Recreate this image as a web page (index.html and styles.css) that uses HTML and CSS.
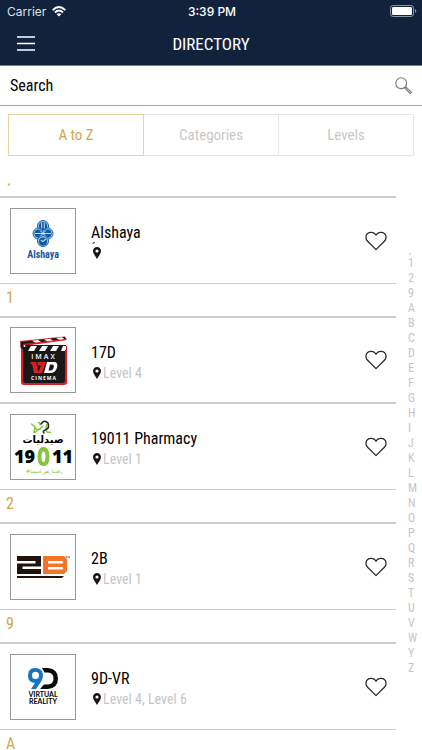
FILE: index.html
```html
<!DOCTYPE html>
<html lang="en">
<head>
<meta charset="UTF-8">
<meta name="viewport" content="width=device-width, initial-scale=1.0">
<title>Directory</title>
<link rel="stylesheet" href="styles.css">
</head>
<body>

<!-- shared icons -->
<svg class="sprite" aria-hidden="true">
  <symbol id="heart" viewBox="0 0 22 20">
    <path d="M11 18.6 L2.6 10.2 C.3 7.8 .5 4.4 2.6 2.6 C4.8 .8 8.4 1 10.2 3.2 L11 4.2 L11.8 3.2 C13.6 1 17.2 .8 19.4 2.6 C21.5 4.4 21.7 7.8 19.4 10.2 Z" fill="none" stroke="#2b2b2b" stroke-width="1.3" stroke-linejoin="round"/>
  </symbol>
  <symbol id="pin" viewBox="0 0 8 12">
    <path fill="#161616" fill-rule="evenodd" d="M4 0 C1.7 0 0 1.7 0 4 C0 6.8 2.6 9 4 12 C5.4 9 8 6.8 8 4 C8 1.7 6.3 0 4 0 Z M4 2.4 A1.6 1.6 0 1 1 4 5.6 A1.6 1.6 0 1 1 4 2.4 Z"/>
  </symbol>
</svg>

<div class="app">
<header>
  <div class="status-bar">
    <div class="carrier">
      Carrier
      <svg width="14" height="11" viewBox="0 0 14 11" aria-hidden="true">
        <g fill="none" stroke="#fff" stroke-width="1.9">
          <path d="M.7 4.1 Q7 -1.9 13.3 4.1"/>
          <path d="M3 6.5 Q7 2.7 11 6.5"/>
        </g>
        <path d="M4.7 8.2 Q7 6.2 9.3 8.2 L7 10.6 Z" fill="#fff"/>
      </svg>
    </div>
    <div class="clock">3:39 PM</div>
    <svg class="battery" width="27" height="12" viewBox="0 0 27 12" aria-hidden="true">
      <rect x=".5" y=".5" width="23" height="11" rx="2.6" fill="none" stroke="#8b95a3"/>
      <rect x="2" y="2" width="20" height="8" rx="1.2" fill="#fff"/>
      <path d="M25 4 Q26.3 4.7 26.3 6 Q26.3 7.3 25 8 Z" fill="#8b95a3"/>
    </svg>
  </div>
  <div class="nav-bar">
    <button type="button" class="menu-btn" aria-label="Menu">
      <svg width="18" height="15" viewBox="0 0 18 15" aria-hidden="true">
        <path d="M0 1 H18 M0 7.5 H18 M0 14 H18" stroke="#fff" stroke-width="1.4"/>
      </svg>
    </button>
    <h1>DIRECTORY</h1>
  </div>
</header>

<form class="search">
  <input type="text" id="search" placeholder="Search" aria-label="Search">
  <button type="submit" aria-label="Search">
    <svg width="17" height="17" viewBox="0 0 17 17" aria-hidden="true">
      <g fill="none" stroke="#777" stroke-width="1.1">
        <circle cx="6.2" cy="6.2" r="5.4"/>
        <path d="M9.8 11 L10.9 9.9 L16.1 14.8 Q16.6 15.4 16 16 Q15.3 16.6 14.7 16 Z"/>
      </g>
    </svg>
  </button>
</form>

<nav class="tabs">
  <button type="button" class="tab active">A to Z</button>
  <button type="button" class="tab">Categories</button>
  <button type="button" class="tab">Levels</button>
</nav>

<main>
<div class="list">
  <h2>&#x2CF;</h2>
  <div class="shop">
    <svg class="logo" viewBox="0 0 64 64" role="img" aria-label="Alshaya">
      <g fill="#9cc4e6" stroke="#1766ad" stroke-width="1">
        <circle cx="32" cy="17" r="5.500"/>
        <circle cx="27.500" cy="24.500" r="5.500"/>
        <circle cx="36.500" cy="24.500" r="5.500"/>
        <circle cx="32" cy="32" r="5.500"/>
      </g>
      <g fill="#1259a3">
        <circle cx="32" cy="17" r="4"/>
        <circle cx="27.500" cy="24.500" r="4"/>
        <circle cx="36.500" cy="24.500" r="4"/>
        <circle cx="32" cy="32.500" r="4"/>
      </g>
      <path d="M30.700 13.500 V19.500 M33.300 13.500 V19.500 M24 24.500 H40 M29 21.500 L35 27.500 M35 21.500 L29 27.500" stroke="#d9e9f7" stroke-width=".9"/>
      <path d="M30 31 Q32 34 34.500 30" stroke="#d9e9f7" stroke-width="1.200" fill="none"/>
      <text x="32" y="49" class="alshaya-name">Alshaya</text>
    </svg>
    <div class="info">
      <h3>Alshaya</h3>
      <p><span class="tick">&#x2CF;</span><svg class="pin" aria-hidden="true"><use href="#pin"/></svg></p>
    </div>
    <button type="button" class="fav" aria-label="Add Alshaya to favourites"><svg aria-hidden="true"><use href="#heart"/></svg></button>
  </div>

  <h2>1</h2>
  <div class="shop">
    <svg class="logo" viewBox="0 0 64 64" role="img" aria-label="IMAX 17D Cinema">
      <path d="M9 13 L54 8.500 L56 12 L13 18 H56 V54 Q56 57 53 57 H13 Q10 57 10 54 V22 Z" fill="#e01b22"/>
      <path d="M12 23 H54 V52 Q54 55 51 55 H15 Q12 55 12 52 Z" fill="#181818"/>
      <path d="M10 14 L54 9 L54.500 11 L13 17 H55 V23 H13 L9.500 19 Z" fill="#181818"/>
      <path d="M21 12.700 L27 12 L31 14.500 L25 15.300 Z M33 11.400 L39 10.700 L43 13 L37 13.800 Z M45 10 L51 9.300 L54 11.500 L49 12.200 Z" fill="#fff"/>
      <path d="M20 18 H26 L23 23 H17 Z M31 18 H37 L34 23 H28 Z M42 18 H48 L45 23 H39 Z M52 18 H55 V21 L54 23 H50 Z" fill="#fff"/>
      <path d="M12 16.500 L54 11.500" stroke="#e01b22" stroke-width="1"/>
      <circle cx="13.500" cy="18" r="1" fill="#fff"/>
      <text x="33" y="31" class="imax">IMAX</text>
      <path d="M19 34 H25 L27.500 45 H23 L21.500 37.500 Z M26 34 H35 L31 45 H27 L30 37.500 H27 Z" fill="#e01b22"/>
      <path fill-rule="evenodd" d="M36 34 H43 Q47.500 34 46 39.500 Q44.500 45 39 45 H33 Z M39 36.500 L37.500 42.500 H39.500 Q42 42.500 42.700 39.500 Q43.500 36.500 41 36.500 Z" fill="#fff"/>
      <text x="33" y="52" class="cinema">CINEMA</text>
    </svg>
    <div class="info">
      <h3>17D</h3>
      <p><svg class="pin" aria-hidden="true"><use href="#pin"/></svg>Level 4</p>
    </div>
    <button type="button" class="fav" aria-label="Add 17D to favourites"><svg aria-hidden="true"><use href="#heart"/></svg></button>
  </div>
  <div class="shop">
    <svg class="logo" viewBox="0 0 64 64" role="img" aria-label="19011 Pharmacy">
      <g fill="none" stroke-width="1.500" stroke-linecap="round">
        <path d="M20.500 9 L24 12 Q25 16 29 14 L32 11 M24 12 L23 17.500 M27 15 L24 17.500 M36 9 Q34 15 36 17 L39.500 17.500 M29 10 Q29 7 27.500 7.500" stroke="#86c440"/>
        <path d="M30 9 Q33 4 37 8 Q39 13 34.500 15 Q31 16 33 18" stroke="#222"/>
      </g>
      <text x="32" y="28" class="arabic-name">صيدليات</text>
      <text x="3" y="48" class="pharmacy-num">19</text>
      <text x="41" y="48" class="pharmacy-num">11</text>
      <path d="M32.500 32 Q38.500 32 38.500 41.500 Q38.500 51 32.500 51 Q26.500 51 26.500 41.500 Q26.500 32 32.500 32 Z M32.500 36.500 Q30.500 36.500 30.500 41.500 Q30.500 47 32.500 47 Q34.500 47 34.500 41.500 Q34.500 36.500 32.500 36.500 Z" fill="#86c440" fill-rule="evenodd"/>
      <text x="33" y="58" class="arabic-tag">#رقمنا_هو_اسمنا</text>
    </svg>
    <div class="info">
      <h3>19011 Pharmacy</h3>
      <p><svg class="pin" aria-hidden="true"><use href="#pin"/></svg>Level 1</p>
    </div>
    <button type="button" class="fav" aria-label="Add 19011 Pharmacy to favourites"><svg aria-hidden="true"><use href="#heart"/></svg></button>
  </div>

  <h2>2</h2>
  <div class="shop">
    <svg class="logo" viewBox="0 0 64 64" role="img" aria-label="2B">
      <path d="M6 21 H30 V31.500 H11.500 V34 H30 V39 H6 V28.500 H24.500 V26 H6 Z" fill="#21130b"/>
      <path fill-rule="evenodd" d="M32 21 H53 L56 24 V36 L53 39 H32 Z M37 26 V28.500 H51 L52.500 27.200 L51 26 Z M37 32 V34.500 H51 L52.500 33.200 L51 32 Z" fill="#f47527"/>
      <path d="M6 41 H53 L51 43 H6 Z" fill="#21130b"/>
      <path d="M54.500 21.500 H56.500 M55.500 21.500 V23 M57 23 V21.500 L57.700 22.500 L58.400 21.500 V23" stroke="#444" stroke-width=".5" fill="none"/>
    </svg>
    <div class="info">
      <h3>2B</h3>
      <p><svg class="pin" aria-hidden="true"><use href="#pin"/></svg>Level 1</p>
    </div>
    <button type="button" class="fav" aria-label="Add 2B to favourites"><svg aria-hidden="true"><use href="#heart"/></svg></button>
  </div>

  <h2>9</h2>
  <div class="shop">
    <svg class="logo" viewBox="0 0 64 64" role="img" aria-label="9D Virtual Reality">
      <path fill-rule="evenodd" d="M31 13 H37 Q47 14 47 23.500 Q47 33 37 34 H29 L33 29.500 H37 Q42.500 29 42.500 23.500 Q42.500 18 37 17.500 H33.500 Z" fill="#0b0b0b"/>
      <path fill-rule="evenodd" d="M24 13 Q32 13 32 20.500 Q32 24 29.500 27.500 L25 34 H20 L24 28 Q17 27.500 17 20.500 Q17 13 24 13 Z M24.500 16.800 Q21 16.800 21 20.500 Q21 24 24.500 24 Q28 24 28 20.500 Q28 16.800 24.500 16.800 Z" fill="#1874bd"/>
      <text x="32" y="42" class="vr-name">VIRTUAL</text>
      <text x="32" y="49" class="vr-name">REALITY</text>
    </svg>
    <div class="info">
      <h3>9D-VR</h3>
      <p><svg class="pin" aria-hidden="true"><use href="#pin"/></svg>Level 4, Level 6</p>
    </div>
    <button type="button" class="fav" aria-label="Add 9D-VR to favourites"><svg aria-hidden="true"><use href="#heart"/></svg></button>
  </div>

  <h2>A</h2>
</div>

<div class="index">
  <span>&#x2CF;</span>
  <a href="#">1</a>
  <a href="#">2</a>
  <a href="#">9</a>
  <a href="#">A</a>
  <a href="#">B</a>
  <a href="#">C</a>
  <a href="#">D</a>
  <a href="#">E</a>
  <a href="#">F</a>
  <a href="#">G</a>
  <a href="#">H</a>
  <a href="#">I</a>
  <a href="#">J</a>
  <a href="#">K</a>
  <a href="#">L</a>
  <a href="#">M</a>
  <a href="#">N</a>
  <a href="#">O</a>
  <a href="#">P</a>
  <a href="#">Q</a>
  <a href="#">R</a>
  <a href="#">S</a>
  <a href="#">T</a>
  <a href="#">U</a>
  <a href="#">V</a>
  <a href="#">W</a>
  <a href="#">Y</a>
  <a href="#">Z</a>
</div>
</main>
</div>

</body>
</html>
```
FILE: styles.css
```css
* {
  box-sizing: border-box;
}
body {
  margin: 0;
  background: #fff;
  color: #000;
  font-family: "Roboto Condensed", "Liberation Sans Narrow", Roboto, sans-serif;
  font-size: 16px;
}
h1, h2, h3, p {
  margin: 0;
  font-weight: normal;
}
button, input {
  font: inherit;
  padding: 0;
  border: 0;
  background: none;
}
svg {
  display: block;
}
.sprite {
  display: none;
}
.app {
  height: 100vh;
  display: flex;
  flex-direction: column;
  overflow: hidden;
}

/* header */
header {
  background: #11233c;
  color: #fff;
  border-bottom: 1px solid #76808e;
}
.status-bar {
  display: grid;
  grid-template-columns: 1fr auto 1fr;
  align-items: center;
  height: 22px;
  padding: 0 5px 0 7px;
  font-family: Inter, sans-serif;
  font-size: 12px;
}
.carrier {
  display: flex;
  align-items: center;
  gap: 6px;
  color: #dde1e6;
}
.clock {
  font-weight: 500;
}
.battery {
  justify-self: end;
}
.nav-bar {
  display: grid;
  grid-template-columns: 52px 1fr 52px;
  align-items: center;
  height: 43px;
}
.menu-btn {
  display: flex;
  justify-content: center;
}
h1 {
  font-size: 17px;
  text-align: center;
}

/* search */
.search {
  display: flex;
  align-items: center;
  height: 40px;
  padding: 0 10px;
  border-bottom: 1px solid #a5a5a5;
}
.search input {
  flex: 1;
  outline: none;
}
.search input::placeholder {
  color: #000;
  opacity: 1;
}

/* tabs */
.tabs {
  display: flex;
  margin: 8px 8px 0;
}
.tab {
  flex: 1;
  height: 42px;
  border: 1px solid #e6e6e6;
  border-left: 0;
  color: #c8c8c8;
  font-size: 15px;
}
.tab.active {
  border: 1px solid #e6d3a0;
  color: #d0a64b;
}

/* directory list */
main {
  flex: 1;
  display: flex;
  min-height: 0;
  padding-top: 8px;
}
.list {
  flex: 1;
}
h2 {
  height: 34px;
  padding-left: 6px;
  border-bottom: 2px solid #cdcdcd;
  color: #d0a64b;
  font-size: 16px;
  line-height: 28px;
}
.shop {
  display: flex;
  align-items: center;
  height: 86px;
  padding: 0 9px 0 10px;
  border-bottom: 1px solid #cdcdcd;
}
.shop:has(+ .shop) {
  border-bottom-width: 2px;
}
.logo {
  width: 66px;
  height: 66px;
  border: 1px solid #999;
}
.info {
  flex: 1;
  padding: 5px 0 0 15px;
}
h3 {
  font-size: 16px;
  line-height: 20px;
}
.info p {
  position: relative;
  display: flex;
  align-items: center;
  gap: 2px;
  height: 20px;
  padding-left: 2px;
  color: #c6c6c6;
  font-size: 14px;
}
.pin {
  width: 8px;
  height: 12px;
}
.tick {
  position: absolute;
  left: 0;
  top: -9px;
  color: #222;
  line-height: 4px;
}
.fav svg {
  width: 22px;
  height: 20px;
}

/* letter index */
.index {
  width: 26px;
  display: flex;
  flex-direction: column;
  align-items: flex-start;
  margin-top: 77px;
  padding-left: 12px;
  color: #c6c6c6;
  font-size: 12px;
  line-height: 15px;
}
.index a {
  color: inherit;
  text-decoration: none;
}

/* logo lettering */
.logo text {
  text-anchor: middle;
}
.logo .alshaya-name {
  fill: #1259a3;
  font-size: 10px;
  font-weight: bold;
}
.logo .imax {
  fill: #fff;
  font-family: "Open Sans", sans-serif;
  font-size: 7px;
  font-weight: 600;
  letter-spacing: 2px;
}
.logo .cinema {
  fill: #fff;
  font-family: "Open Sans", sans-serif;
  font-size: 5px;
  font-weight: bold;
  letter-spacing: 1px;
}
.logo .arabic-name {
  font-family: "DejaVu Sans", sans-serif;
  font-size: 10px;
  font-weight: bold;
}
.logo .pharmacy-num {
  font-family: "Open Sans", sans-serif;
  font-size: 18px;
  font-weight: 800;
  text-anchor: start;
}
.logo .arabic-tag {
  fill: #86c440;
  font-family: "DejaVu Sans", sans-serif;
  font-size: 5px;
}
.logo .vr-name {
  font-family: Lato, sans-serif;
  font-size: 7px;
  font-weight: bold;
}
```
